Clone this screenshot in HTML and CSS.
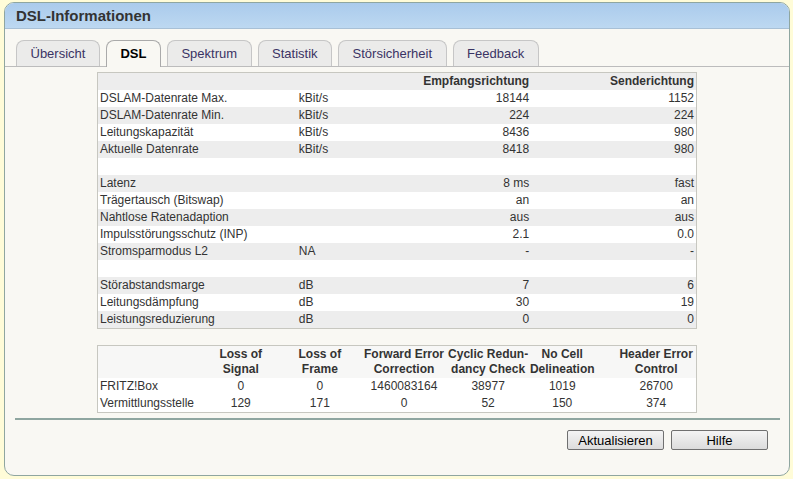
FILE: index.html
```html
<!DOCTYPE html>
<html>
<head>
<meta charset="utf-8">
<link rel="stylesheet" href="styles.css">
</head>
<body>
<div class="box">
  <div class="header">DSL-Informationen</div>
  <div class="content">
    <div class="tabs">
      <div class="tab">Übersicht</div>
      <div class="tab active">DSL</div>
      <div class="tab">Spektrum</div>
      <div class="tab">Statistik</div>
      <div class="tab">Störsicherheit</div>
      <div class="tab">Feedback</div>
    </div>
    <table class="data">
      <colgroup><col class="c1"><col class="c2"><col class="c3"><col class="c4"></colgroup>
      <tr class="g head"><th></th><th></th><th class="r">Empfangsrichtung</th><th class="r">Senderichtung</th></tr>
      <tr><td>DSLAM-Datenrate Max.</td><td>kBit/s</td><td class="r">18144</td><td class="r">1152</td></tr>
      <tr class="g"><td>DSLAM-Datenrate Min.</td><td>kBit/s</td><td class="r">224</td><td class="r">224</td></tr>
      <tr><td>Leitungskapazität</td><td>kBit/s</td><td class="r">8436</td><td class="r">980</td></tr>
      <tr class="g"><td>Aktuelle Datenrate</td><td>kBit/s</td><td class="r">8418</td><td class="r">980</td></tr>
      <tr><td></td><td></td><td></td><td></td></tr>
      <tr class="g"><td>Latenz</td><td></td><td class="r">8 ms</td><td class="r">fast</td></tr>
      <tr><td>Trägertausch (Bitswap)</td><td></td><td class="r">an</td><td class="r">an</td></tr>
      <tr class="g"><td>Nahtlose Ratenadaption</td><td></td><td class="r">aus</td><td class="r">aus</td></tr>
      <tr><td>Impulsstörungsschutz (INP)</td><td></td><td class="r">2.1</td><td class="r">0.0</td></tr>
      <tr class="g"><td>Stromsparmodus L2</td><td>NA</td><td class="r">-</td><td class="r">-</td></tr>
      <tr><td></td><td></td><td></td><td></td></tr>
      <tr class="g"><td>Störabstandsmarge</td><td>dB</td><td class="r">7</td><td class="r">6</td></tr>
      <tr><td>Leitungsdämpfung</td><td>dB</td><td class="r">30</td><td class="r">19</td></tr>
      <tr class="g"><td>Leistungsreduzierung</td><td>dB</td><td class="r">0</td><td class="r">0</td></tr>
    </table>
    <table class="errors">
      <colgroup><col class="e1"><col class="e2"><col class="e3"><col class="e4"><col class="e5"><col class="e6"><col class="e7"></colgroup>
      <tr class="ehead"><th></th><th>Loss of<br>Signal</th><th>Loss of<br>Frame</th><th>Forward Error<br>Correction</th><th>Cyclic Redun-<br>dancy Check</th><th>No Cell<br>Delineation</th><th class="last">Header Error<br>Control</th></tr>
      <tr><td class="lbl">FRITZ!Box</td><td>0</td><td>0</td><td>1460083164</td><td>38977</td><td>1019</td><td class="last">26700</td></tr>
      <tr><td class="lbl">Vermittlungsstelle</td><td>129</td><td>171</td><td>0</td><td>52</td><td>150</td><td class="last">374</td></tr>
    </table>
    <div class="sep"></div>
    <div class="buttons">
      <button class="btn">Aktualisieren</button>
      <button class="btn">Hilfe</button>
    </div>
  </div>
</div>
</body>
</html>
```

FILE: styles.css
```css
html, body {
  margin: 0;
  padding: 0;
  background: #fffcd8;
  font-family: "Liberation Sans", Arial, sans-serif;
  color: #333;
}
.box {
  margin: 2px 0 0 4px;
  width: 784px;
  height: 472px;
  border: 1px solid #8fa6a0;
  border-radius: 10px;
  overflow: hidden;
  background: #f9f8f3;
  display: flex;
  flex-direction: column;
}
.header {
  height: 25px;
  line-height: 26px;
  background: linear-gradient(#aacbec, #bdd8f1);
  border-bottom: 1px solid #a8c0d6;
  padding-left: 11px;
  font-size: 15px;
  font-weight: bold;
  color: #333;
  flex: none;
}
.content {
  flex: 1;
  display: flex;
  flex-direction: column;
}
.tabs {
  display: flex;
  gap: 6px;
  margin-top: 11px;
  padding-left: 11px;
  border-bottom: 1px solid #bcbcbc;
  height: 26px;
  align-items: flex-end;
}
.tab {
  height: 25px;
  line-height: 26px;
  padding: 0 13.5px;
  font-size: 13px;
  color: #3a3364;
  background: #ebebea;
  border: 1px solid #c6c6c6;
  border-bottom: none;
  border-radius: 8px 8px 0 0;
}
.tab.active {
  background: #f9f8f3;
  border-color: #aaaaaa;
  color: #000;
  font-weight: bold;
  height: 26px;
  margin-bottom: -1px;
  padding: 0 13.5px;
}
table {
  border-collapse: collapse;
  table-layout: fixed;
  font-size: 12px;
  color: #333;
}
.data {
  width: 600px;
  margin: 5px auto 0;
  border: 1px solid #c7c7c0;
  background: #fff;
}
.c1 { width: 199px; }
.c2 { width: 110px; }
.c3 { width: 124px; }
.c4 { width: 165px; }
.data td, .data th {
  height: 17px;
  padding: 0 2px;
  line-height: 17px;
  text-align: left;
  white-space: nowrap;
}
.data .r { text-align: right; }
.data th { font-weight: bold; }
.data tr.g { background: #ededed; }
.errors {
  width: 600px;
  margin: 16px auto 0;
  border: 1px solid #c7c7c0;
  background: #fff;
}
.e1 { width: 104px; }
.e2 { width: 78px; }
.e3 { width: 80px; }
.e4 { width: 88px; }
.e5 { width: 80px; }
.e6 { width: 68px; }
.e7 { width: 100px; }
.errors th {
  font-weight: bold;
  line-height: 15px;
  padding: 1px 0;
  text-align: center;
  background: #f7f7f6;
  white-space: nowrap;
}
.errors td {
  text-align: center;
  height: 17px;
  line-height: 17px;
  padding: 0;
  white-space: nowrap;
}
.errors td.lbl { text-align: left; padding-left: 2px; }
.errors .last { padding-left: 20px; }
.sep {
  margin: 5px 9px 0 10px;
  height: 2px;
  background: #8fa6a0;
}
.buttons {
  display: flex;
  justify-content: flex-end;
  gap: 7px;
  padding-right: 21px;
  margin-top: 10px;
}
.btn {
  width: 97px;
  height: 20px;
  padding: 0;
  font-family: "Liberation Sans", Arial, sans-serif;
  font-size: 13px;
  color: #000;
  background: linear-gradient(#f4f4f4, #dcdcdc);
  border: 1px solid #707070;
  border-radius: 2px;
}
```
